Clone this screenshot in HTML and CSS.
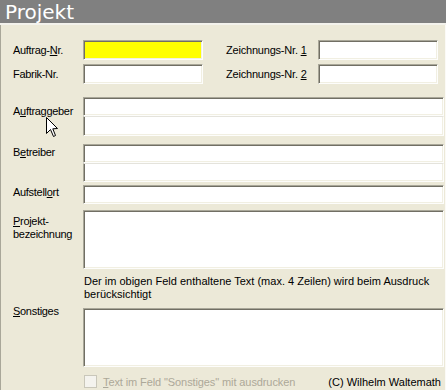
FILE: index.html
```html
<!DOCTYPE html>
<html lang="de">

<head>
    <meta charset="UTF-8" />
    <title>Projekt</title>
    <link rel="stylesheet" href="styles.css">
</head>

<body>
    <div class="window">
        <div class="title">Projekt</div>

        <div class="panel">
            <div class="row">
                <label class="lbl">Auftrag-<u>N</u>r.</label>
                <input class="field short yellow" type="text" />
                <label class="lbl-r">Zeichnungs-Nr. <u>1</u></label>
                <input class="field short" type="text" />
            </div>
            <div class="row row2">
                <label class="lbl">Fabrik-Nr.</label>
                <input class="field short" type="text" />
                <label class="lbl-r">Zeichnungs-Nr. <u>2</u></label>
                <input class="field short" type="text" />
            </div>

            <div class="block b-auftraggeber">
                <label class="lbl">A<u>u</u>ftraggeber</label>
                <div class="stack">
                    <input class="field long" type="text" />
                    <input class="field long next" type="text" />
                </div>
            </div>

            <div class="block b-betreiber">
                <label class="lbl">B<u>e</u>treiber</label>
                <div class="stack">
                    <input class="field long" type="text" />
                    <input class="field long next" type="text" />
                </div>
            </div>

            <div class="block b-aufstellort">
                <label class="lbl">Aufstell<u>o</u>rt</label>
                <input class="field long" type="text" />
            </div>

            <div class="block b-projekt">
                <label class="lbl"><u>P</u>rojekt-<br>bezeichnung</label>
                <textarea class="field long area"></textarea>
            </div>

            <div class="note">
                Der im obigen Feld enthaltene Text (max. 4 Zeilen) wird beim Ausdruck<br>
                berücksichtigt
            </div>

            <div class="block b-sonstiges">
                <label class="lbl"><u>S</u>onstiges</label>
                <textarea class="field long area"></textarea>
            </div>

            <div class="footer">
                <span class="check"></span>
                <span class="check-label"><u>T</u>ext im Feld "Sonstiges" mit ausdrucken</span>
                <span class="copy">(C) Wilhelm Waltemath</span>
            </div>
        </div>

        <svg class="cursor" width="13" height="21" viewBox="0 0 13 21">
            <path d="M0.5 0.5 L0.5 16.5 L4.5 12.5 L7.5 19.5 L9.5 18.5 L6.8 11.8 L11.5 11.5 Z" fill="#fff" stroke="#000" stroke-width="1" />
        </svg>
    </div>
</body>

</html>
```

FILE: styles.css
```css
:root {
    --panel: #ece9d8;
    --font: 'Liberation Sans', Arial, sans-serif;
}

html,
body {
    margin: 0;
    padding: 0;
}

body {
    font-family: var(--font);
    font-size: 11px;
    color: #000;
}

.window {
    position: relative;
    width: 446px;
    height: 390px;
    background-color: var(--panel);
    overflow: hidden;
}

.title {
    height: 23px;
    line-height: 25px;
    padding-left: 5px;
    background-color: #808080;
    border-bottom: 2px solid #f3f2ec;
    color: #fff;
    font-family: 'DejaVu Sans', sans-serif;
    font-size: 20px;
    overflow: hidden;
}

.panel {
    height: 365px;
    box-sizing: border-box;
    padding: 15px 0 0 12px;
    border-left: 1px solid #a9a799;
    border-right: 1px solid #fbfaf6;
}

/* obere Zeilen mit zwei Feldern */
.row {
    display: flex;
    align-items: center;
    height: 20px;
}

.row2 {
    margin-top: 4px;
}

.lbl {
    width: 70px;
    flex-shrink: 0;
    line-height: 13px;
    letter-spacing: -0.3px;
    white-space: nowrap;
}

.lbl-r {
    width: 92px;
    margin-left: 23px;
    letter-spacing: -0.2px;
    white-space: nowrap;
}

u {
    text-decoration: underline;
    text-underline-offset: 1px;
}

/* Eingabefelder, eingesenkt */
.field {
    display: block;
    box-sizing: border-box;
    margin: 0;
    padding: 1px 3px;
    font: inherit;
    background-color: #fff;
    border: 1px solid;
    border-color: #a9a799 #fdfdfb #fdfdfb #a9a799;
    box-shadow: inset 1px 1px #716f64, inset -1px -1px #f1efe2;
    outline: none;
    resize: none;
}

.short {
    width: 120px;
    height: 20px;
}

.yellow {
    background-color: #ffff00;
}

.long {
    width: 361px;
    height: 19px;
}

.next {
    height: 19px;
    border-top-color: #e4e3dc;
    box-shadow: inset 1px 0 #716f64, inset -1px -1px #f1efe2;
}

.b-auftraggeber .next {
    height: 20px;
}

.area {
    height: 59px;
}

.block {
    display: flex;
    align-items: flex-start;
}

.b-auftraggeber {
    margin-top: 13px;
}

.b-auftraggeber .lbl {
    margin-top: 8px;
}

.b-betreiber {
    margin-top: 8px;
}

.b-betreiber .lbl {
    margin-top: 2px;
}

.b-aufstellort {
    margin-top: 3px;
}

.b-aufstellort .lbl {
    margin-top: 1px;
}

.b-projekt {
    margin-top: 6px;
}

.b-projekt .lbl {
    margin-top: 5px;
}

.note {
    margin: 6px 0 0 71px;
    line-height: 13px;
}

.b-sonstiges {
    margin-top: 7px;
}

.b-sonstiges .lbl {
    margin-top: -3px;
}

.footer {
    display: flex;
    align-items: center;
    height: 13px;
    margin-top: 8px;
}

.check {
    width: 13px;
    height: 13px;
    box-sizing: border-box;
    margin-left: 71px;
    border: 1px solid #c9c7ba;
    background-color: #f4f3ee;
}

.check-label {
    margin-left: 6px;
    color: #aca899;
    letter-spacing: -0.1px;
}

.copy {
    margin-left: auto;
    padding-right: 4px;
}

.cursor {
    position: absolute;
    left: 46px;
    top: 117px;
}
```
